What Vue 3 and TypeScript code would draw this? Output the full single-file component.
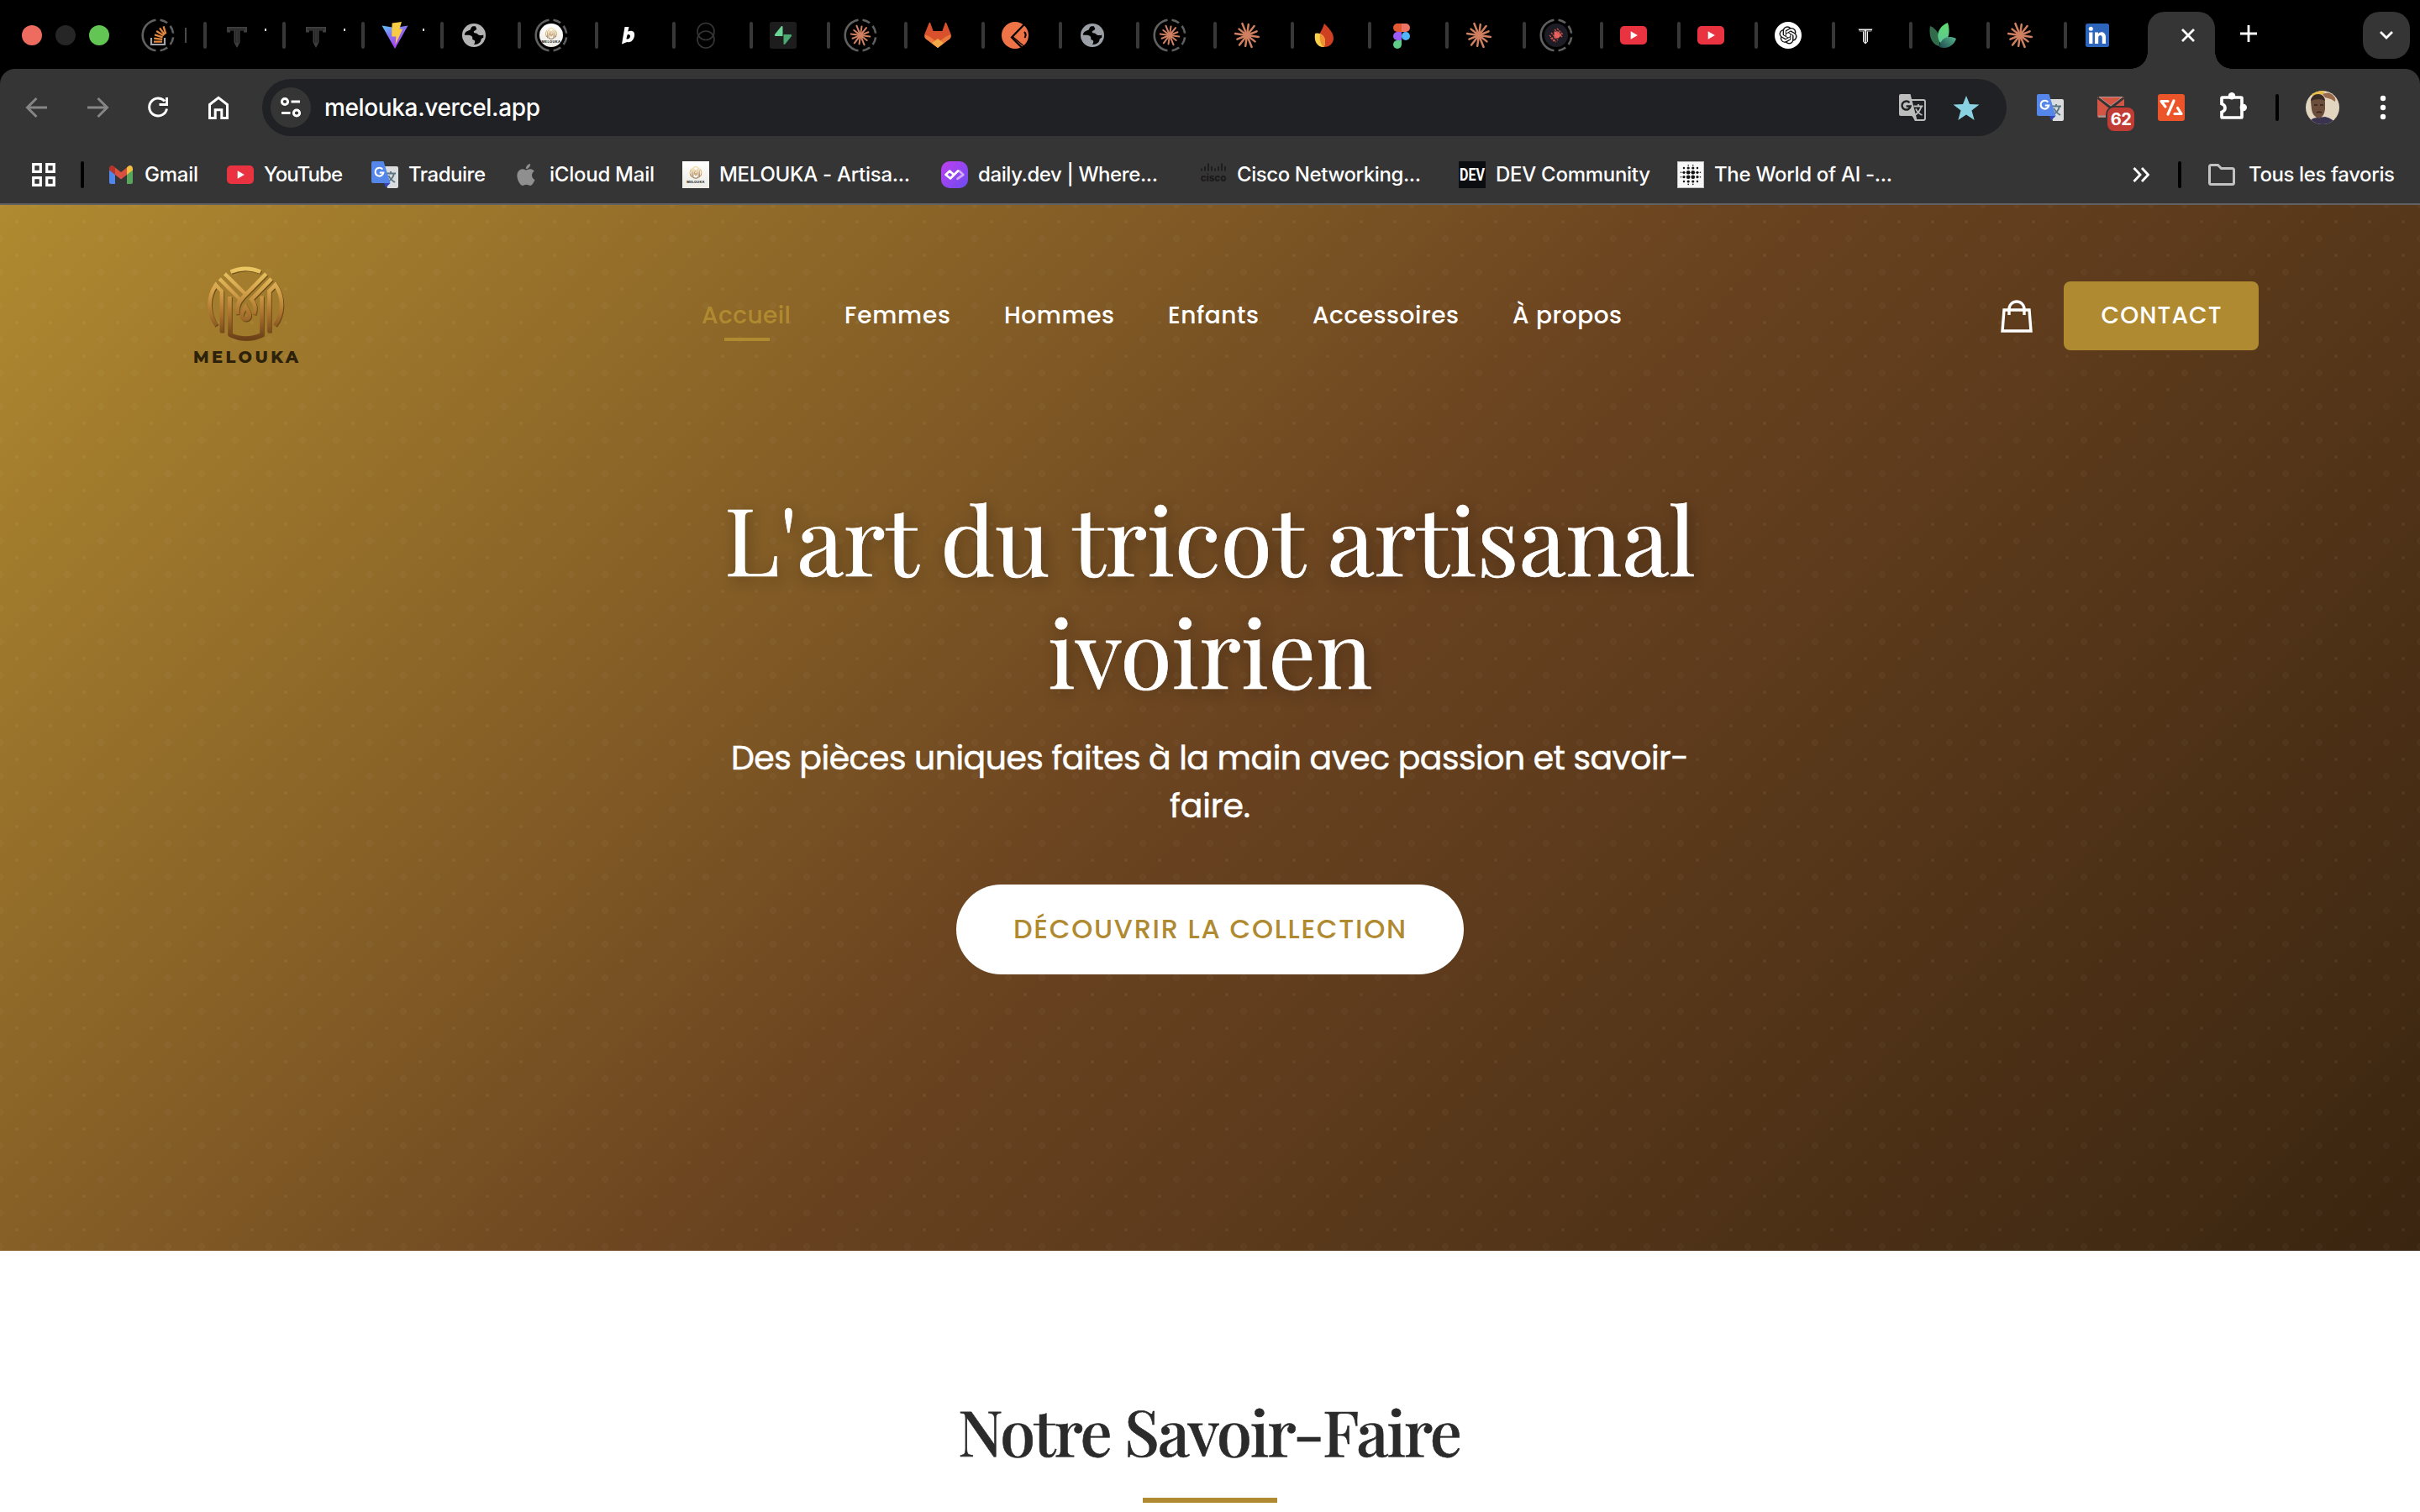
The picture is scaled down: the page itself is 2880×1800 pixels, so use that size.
<script setup lang="ts">
import type { Directive } from 'vue'

interface Tab {
  icon: string
  width: number
  ring?: boolean
  hint?: string
}

interface Bookmark {
  icon: string
  label: string
  text: number
  slot: number
}

interface NavLink {
  label: string
  text: number
  active?: boolean
}

/** Tracks a label out (or in) so that it fills the given width in pixels. */
const vFit: Directive<HTMLElement, number> = {
  mounted(el, { value }) {
    const count = Array.from(el.textContent ?? '').length
    const natural = el.getBoundingClientRect().width
    const spacing = (value - natural) / Math.max(1, count - 1)
    el.style.letterSpacing = `${spacing}px`
    el.style.marginRight = `${-spacing}px`
  },
}

const tabs: Tab[] = [
  { icon: 'stack', width: 94, ring: true, hint: 'line' },
  { icon: 'tdark', width: 94, hint: 'dot' },
  { icon: 'tdark', width: 94, hint: 'dot' },
  { icon: 'vite', width: 94, hint: 'dot' },
  { icon: 'globe', width: 92 },
  { icon: 'melouka-round', width: 92, ring: true },
  { icon: 'bolt-b', width: 92 },
  { icon: 'rings', width: 92 },
  { icon: 'supabase', width: 92 },
  { icon: 'claude-small', width: 92, ring: true },
  { icon: 'gitlab', width: 92 },
  { icon: 'postman', width: 92 },
  { icon: 'globe-cool', width: 92 },
  { icon: 'claude-small', width: 92, ring: true },
  { icon: 'claude', width: 92 },
  { icon: 'firebase', width: 92 },
  { icon: 'figma', width: 92 },
  { icon: 'claude', width: 92 },
  { icon: 'diamond', width: 92, ring: true },
  { icon: 'youtube', width: 92 },
  { icon: 'youtube', width: 92 },
  { icon: 'openai', width: 92 },
  { icon: 'tlight', width: 92 },
  { icon: 'leaf', width: 92 },
  { icon: 'claude', width: 92 },
  { icon: 'linkedin', width: 98 },
]

const bookmarks: Bookmark[] = [
  { icon: 'gmail', label: 'Gmail', text: 64, slot: 142 },
  { icon: 'youtube', label: 'YouTube', text: 94, slot: 172 },
  { icon: 'translate', label: 'Traduire', text: 92, slot: 168 },
  { icon: 'apple', label: 'iCloud Mail', text: 125, slot: 202 },
  { icon: 'melouka-square', label: 'MELOUKA - Artisa...', text: 227, slot: 308 },
  { icon: 'daily', label: 'daily.dev | Where...', text: 214, slot: 308 },
  { icon: 'cisco', label: 'Cisco Networking...', text: 219, slot: 308 },
  { icon: 'dev', label: 'DEV Community', text: 184, slot: 260 },
  { icon: 'world', label: 'The World of AI -...', text: 212, slot: 300 },
]

const links: NavLink[] = [
  { label: 'Accueil', text: 106, active: true },
  { label: 'Femmes', text: 126 },
  { label: 'Hommes', text: 131 },
  { label: 'Enfants', text: 108 },
  { label: 'Accessoires', text: 174 },
  { label: 'À propos', text: 130 },
]

const rays = [14, 12, 15, 13, 14.5, 12.5, 14, 12, 15, 13, 14, 12.5].map((length, i) => {
  const angle = ((i * 30 + 8) * Math.PI) / 180
  return { x: 16 + length * Math.cos(angle), y: 16 + length * Math.sin(angle) }
})

const dots = [
  [8, 8, 1.2], [13.2, 8, 1.6], [18.8, 8, 1.6], [24, 8, 1.2],
  [8, 13.3, 1.6], [13.2, 13.3, 2.3], [18.8, 13.3, 2.3], [24, 13.3, 1.6], [4.5, 13.3, 0.8], [27.5, 13.3, 0.8],
  [8, 18.7, 1.6], [13.2, 18.7, 2.3], [18.8, 18.7, 2.3], [24, 18.7, 1.6], [4.5, 18.7, 0.8], [27.5, 18.7, 0.8],
  [8, 24, 1.2], [13.2, 24, 1.6], [18.8, 24, 1.6], [24, 24, 1.2],
  [13.2, 4.8, 0.8], [18.8, 4.8, 0.8], [13.2, 27.4, 0.8], [18.8, 27.4, 0.8],
]
</script>

<template>
  <svg class="sprite" width="0" height="0" aria-hidden="true">
    <defs>
      <linearGradient id="g-vite" x1="0" y1="0" x2="0.6" y2="1">
        <stop offset="0" stop-color="#5cc8fb" />
        <stop offset="0.5" stop-color="#8a6cf5" />
        <stop offset="1" stop-color="#b13bf0" />
      </linearGradient>
      <linearGradient id="g-gold" gradientUnits="userSpaceOnUse" x1="337" y1="83" x2="337" y2="350">
        <stop offset="0" stop-color="#edca64" />
        <stop offset="0.35" stop-color="#d2a04a" />
        <stop offset="0.65" stop-color="#a9712e" />
        <stop offset="1" stop-color="#683c16" />
      </linearGradient>
      <linearGradient id="g-daily" x1="0" y1="0" x2="1" y2="1">
        <stop offset="0" stop-color="#c03ff0" />
        <stop offset="1" stop-color="#6a4cf0" />
      </linearGradient>
      <linearGradient id="g-leaf" x1="0.5" y1="0" x2="0.5" y2="1">
        <stop offset="0" stop-color="#62dc6c" />
        <stop offset="1" stop-color="#5cc49c" />
      </linearGradient>
      <linearGradient id="g-leaf-low" x1="1" y1="0.2" x2="0" y2="0.9">
        <stop offset="0" stop-color="#52b08a" />
        <stop offset="1" stop-color="#1f4c50" />
      </linearGradient>
      <linearGradient id="g-paper" x1="0" y1="0" x2="0" y2="1">
        <stop offset="0" stop-color="#ffffff" />
        <stop offset="1" stop-color="#ecebe4" />
      </linearGradient>
    </defs>

    <symbol id="i-stack" viewBox="0 0 32 32">
      <path d="M8 19v8h16v-8" fill="none" stroke="#a3a7ab" stroke-width="2.2" />
      <g stroke="#e5873c" stroke-width="2.3">
        <path d="M11 23.6h10M11.2 19.6l10 1.2M12 15.3l9.6 3M14.2 11l8.6 5.4M18 7.4l6 8M22.6 5.4l2.6 9" />
      </g>
    </symbol>
    <symbol id="i-tdark" viewBox="0 0 32 32">
      <path d="M4 6h24v6.500h-4v-2h-4.500v14L16 31l-3.500-6.500v-14H8v2H4z" fill="#3e3e3e" />
      <path d="M6 8.800h20M14.800 10v15M17.200 10v15" stroke="#111" stroke-width="0.8" />
    </symbol>
    <symbol id="i-tlight" viewBox="0 0 32 32">
      <path d="M7.5 8.5h17l-1.500 3h-4v12l-3 3-3-3v-12H9z" fill="#f2f2f2" />
      <path d="M8.500 10.800h6.200v13.400M23.500 10.800h-6.200v13.400" fill="none" stroke="#000" stroke-width="0.9" />
    </symbol>
    <symbol id="i-vite" viewBox="0 0 32 32">
      <path d="M0.5 4.5 16 32 31.5 4.5 16 7z" fill="url(#g-vite)" />
      <path d="M12.6 1.4 24 0l-2.6 8.6h3.8L16.6 27l.8-9.6h-5.2z" fill="#f8cb45" />
    </symbol>
    <symbol id="i-globe" viewBox="0 0 32 32">
      <circle cx="16" cy="16" r="14" fill="#b3b3b3" />
      <path d="M17.8 5.2h-2.6c-3 .4-2.8 4.4-4.4 4.9C8 10.8 5 12.5 4.8 15.6c2.4 1.2 7.4-.4 8.9 1.8 1.4 2-.5 3.5 2 4.2 2 .6 2 3 .3 5.4 5.600.4 8.200-3.400 8.300-5 .1-1.900 1.300-2.300 3-3.200v-3.400c-2.700 1-5.700.6-7-1-1.300-1.600-3.800-.4-4.500-2.200-.6-1.900 3.900-2.300 3.400-4.300z" fill="#000" />
    </symbol>
    <symbol id="i-globe-cool" viewBox="0 0 32 32">
      <circle cx="16" cy="16" r="14" fill="#9aa0a6" />
      <path d="M17.8 5.2h-2.6c-3 .4-2.8 4.4-4.4 4.9C8 10.8 5 12.5 4.8 15.6c2.4 1.2 7.4-.4 8.9 1.8 1.4 2-.5 3.5 2 4.2 2 .6 2 3 .3 5.4 5.600.4 8.200-3.400 8.300-5 .1-1.900 1.300-2.300 3-3.200v-3.400c-2.700 1-5.700.6-7-1-1.300-1.600-3.800-.4-4.500-2.200-.6-1.900 3.900-2.300 3.400-4.300z" fill="#000" />
    </symbol>
    <symbol id="i-mark" viewBox="200 80 275 275">
      <g fill="none" stroke="url(#g-gold)" stroke-width="14">
        <path d="M283 103Q337 80 391 103" />
        <path d="M232 296A127 127 0 0 1 230 150L251 173V320" />
        <path d="M442 296A127 127 0 0 0 444 150L422 173V320" />
        <path d="M280 192V328Q337 356 395 328V190" />
        <path d="M262 110 337 184M243 128 316 202Q307 218 307 256" />
        <path d="M411 110 330 192Q314 208 308 228M430 128 358 202Q378 226 367 256" />
        <path d="M337 229C326 246 323 252 323 260a14 14 0 0 0 28 0C351 252 348 246 337 229z" />
      </g>
    </symbol>
    <symbol id="i-bolt-b" viewBox="0 0 32 32">
      <path d="M11.5 6h5l-1.200 5.500c4.500-2 8.700-.2 7.700 5.300-.9 5.800-5.200 8.400-8.700 7.200L8 26.500zM14.600 15.500l-1.200 4.800c2.600.8 4.100-.6 4.500-2.600.4-2.200-1.300-3.200-3.300-2.200z" fill="#fff" fill-rule="evenodd" />
    </symbol>
    <symbol id="i-rings" viewBox="0 0 32 32">
      <g fill="none" stroke="#363636" stroke-width="1.6">
        <circle cx="16" cy="11.5" r="10" />
        <circle cx="16" cy="21" r="10" />
      </g>
    </symbol>
    <symbol id="i-supabase" viewBox="0 0 32 32">
      <rect width="32" height="32" rx="3" fill="#1d1d1d" />
      <path d="M15.5 6v11H7.200c-1.300 0-1.800-1.200-1-2.200L13.600 5.500c.7-.8 1.900-.4 1.900.5z" fill="#6bd396" />
      <path d="M16.5 26V15h8.300c1.300 0 1.800 1.200 1 2.200l-7.400 9.300c-.7.8-1.900.4-1.900-.5z" fill="#4ba873" />
    </symbol>
    <symbol id="i-claude" viewBox="0 0 32 32">
      <g stroke="#d08060" stroke-width="2.5" stroke-linecap="round">
        <line v-for="(ray, i) in rays" :key="i" x1="16" y1="16" :x2="ray.x" :y2="ray.y" />
      </g>
    </symbol>
    <symbol id="i-claude-small" viewBox="0 0 32 32">
      <use href="#i-claude" x="3" y="3" width="26" height="26" />
    </symbol>
    <symbol id="i-gitlab" viewBox="0 0 32 32">
      <path d="M16 31 1.500 20Q-.6 17.500.6 14L5.600 1.500Q6.500.2 7.300 1.500L10.600 11h10.800l3.300-9.500q.8-1.300 1.700 0L31.400 14q1.200 3.500-.9 6z" fill="#d9502c" />
      <path d="M.4 15.500Q4 15.800 9 19.500L16 25l7-5.500q5-3.700 8.600-4 .3 2.600-1.100 4.500L16 31 1.500 20Q.1 18.100.4 15.500z" fill="#ec7a3d" />
      <path d="M9 25.300 16 20l7 5.300L16 31z" fill="#f3a945" />
    </symbol>
    <symbol id="i-postman" viewBox="0 0 32 32">
      <circle cx="16" cy="16" r="16" fill="#ee7447" />
      <path d="M27 3 12 18.500l12 12" fill="none" stroke="#000" stroke-width="2.2" />
      <path d="M13 17.500l13 11" fill="none" stroke="#000" stroke-width="1.2" />
      <path d="M27 12q3 3 .5 7" fill="none" stroke="#000" stroke-width="2" />
    </symbol>
    <symbol id="i-firebase" viewBox="0 0 32 32">
      <path d="M16 2c8 8 11 12 11 18 0 5-4.500 10-11 10-5 0-8-3-8-9C8 16 13 12 16 2z" fill="#cf4022" />
      <path d="M5 14c6-2 12 3 12 9 0 4-1 7-2 7C8 30 3.500 24 5 14z" fill="#f8cf48" />
      <path d="M11 14.500c4 2 6 5 6 8.500 0 4-1 7-2 7 -4-4-5-10-4-15.500z" fill="#ef9331" />
    </symbol>
    <symbol id="i-figma" viewBox="0 0 32 32">
      <path d="M11 2h5v10h-5a5 5 0 0 1 0-10z" fill="#e35a32" />
      <path d="M16 2h5a5 5 0 0 1 0 10h-5z" fill="#ee7468" />
      <path d="M11 12h5v10h-5a5 5 0 0 1 0-10z" fill="#9b5cf6" />
      <circle cx="21" cy="17" r="5" fill="#54b4f8" />
      <path d="M11 22h5v5a5 5 0 1 1-5-5z" fill="#5fcb86" />
    </symbol>
    <symbol id="i-diamond" viewBox="0 0 32 32">
      <circle cx="16" cy="16" r="14" fill="#1e1c24" />
      <path d="M13.5 11.500h5l4 4-4 4h-5z" fill="#e8625e" />
      <path d="M8 16l8 8M10 13l8 9M17 8l7 7M14 9l9 9M9.500 19l5 5" stroke="#c9524f" stroke-width="1.4" stroke-dasharray="2.5 1" />
    </symbol>
    <symbol id="i-youtube" viewBox="0 0 32 32">
      <rect y="5" width="32" height="22" rx="5" fill="#ea3340" />
      <path d="M12.700 11.300v9.400l8.200-4.700z" fill="#fff" />
    </symbol>
    <symbol id="i-openai" viewBox="0 0 32 32">
      <circle cx="16" cy="16" r="16" fill="#fff" />
      <path transform="translate(5.5 5.3) scale(0.88)" d="M22.2819 9.8211a5.9847 5.9847 0 0 0-.5157-4.9108 6.0462 6.0462 0 0 0-6.5098-2.9A6.0651 6.0651 0 0 0 4.9807 4.1818a5.9847 5.9847 0 0 0-3.9977 2.9 6.0462 6.0462 0 0 0 .7427 7.0966 5.98 5.98 0 0 0 .511 4.9107 6.051 6.051 0 0 0 6.5146 2.9001A5.9847 5.9847 0 0 0 13.2599 24a6.0557 6.0557 0 0 0 5.7718-4.2058 5.9894 5.9894 0 0 0 3.9977-2.9001 6.0557 6.0557 0 0 0-.7475-7.0729zm-9.022 12.6081a4.4755 4.4755 0 0 1-2.8764-1.0408l.1419-.0804 4.7783-2.7582a.7948.7948 0 0 0 .3927-.6813v-6.7369l2.02 1.1686a.071.071 0 0 1 .038.052v5.5826a4.504 4.504 0 0 1-4.4945 4.4944zm-9.6607-4.1254a4.4708 4.4708 0 0 1-.5346-3.0137l.142.0852 4.783 2.7582a.7712.7712 0 0 0 .7806 0l5.8428-3.3685v2.3324a.0804.0804 0 0 1-.0332.0615L9.74 19.9502a4.4992 4.4992 0 0 1-6.1408-1.6464zM2.3408 7.8956a4.485 4.485 0 0 1 2.3655-1.9728V11.6a.7664.7664 0 0 0 .3879.6765l5.8144 3.3543-2.0201 1.1685a.0757.0757 0 0 1-.071 0l-4.8303-2.7865A4.504 4.504 0 0 1 2.3408 7.872zm16.5963 3.8558L13.1038 8.364 15.1192 7.2a.0757.0757 0 0 1 .071 0l4.8303 2.7913a4.4944 4.4944 0 0 1-.6765 8.1042v-5.6772a.79.79 0 0 0-.407-.667zm2.0107-3.0231l-.142-.0852-4.7735-2.7818a.7759.7759 0 0 0-.7854 0L9.409 9.2297V6.8974a.0662.0662 0 0 1 .0284-.0615l4.8303-2.7866a4.4992 4.4992 0 0 1 6.6802 4.66zM8.3065 12.863l-2.02-1.1638a.0804.0804 0 0 1-.038-.0567V6.0742a4.4992 4.4992 0 0 1 7.3757-3.4537l-.142.0805L8.704 5.459a.7948.7948 0 0 0-.3927.6813zm1.0976-2.3654l2.602-1.4998 2.6069 1.4998v2.9994l-2.5974 1.4997-2.6067-1.4997Z" fill="#111" />
    </symbol>
    <symbol id="i-leaf" viewBox="0 0 32 32">
      <path d="M1 5c9 4 13 12 11 24C3 27-1 17 1 5z" fill="#316b4c" />
      <path d="M22 1c3 10 2 20-6 26-8-4-9-20 6-26z" fill="url(#g-leaf)" />
      <path d="M32 20c-3 9-11 13-20 10 1-10 10-15 20-10z" fill="url(#g-leaf-low)" />
    </symbol>
    <symbol id="i-linkedin" viewBox="0 0 32 32">
      <rect x="2" y="2" width="28" height="28" rx="2.5" fill="#2d65bc" />
      <circle cx="8.3" cy="8.3" r="2.5" fill="#fff" />
      <path d="M6.200 12.500h4.200V26H6.200zM13 12.500h4v1.900c2.200-3.600 9-2.800 9 3.600v8h-4.200v-7c0-4-4.600-3.700-4.600 0v7H13z" fill="#fff" />
    </symbol>
    <symbol id="i-gmail" viewBox="0 0 32 32">
      <path d="M2 9v16q0 2 2 2h5V14z" fill="#4f86ec" />
      <path d="M30 9v16q0 2-2 2h-5V14z" fill="#58a55c" />
      <path d="M9 7.500 16 13l7-5.500V16l-7 5.500L9 16z" fill="#d95040" />
      <path d="M2 9c0-4 3.500-5 5.500-3L9 7.300V16l-7-5.500z" fill="#b5352a" />
      <path d="M30 9c0-4-3.500-5-5.500-3L23 7.300V16l7-5.500z" fill="#f2bf42" />
    </symbol>
    <symbol id="i-translate" viewBox="0 0 32 32">
      <path d="M13 6h17q2 0 2 2v22q0 2-2 2H19z" fill="#dadcdd" />
      <path d="M17.500 14.500h11.500M23 12v2.500M19.500 24.500q6-3.500 7.500-10M20.500 17q2 5 7.500 8" fill="none" stroke="#5d7684" stroke-width="1.9" />
      <path d="M15 26h7.500L17 31.500z" fill="#3343b8" />
      <path d="M2 0h12.500L22.500 26H2q-2 0-2-2V2q0-2 2-2z" fill="#5586ea" />
      <path d="M13.300 9.600A4.900 4.900 0 1 0 14.300 13.500H9.800" fill="none" stroke="#fff" stroke-width="2.1" />
    </symbol>
    <symbol id="i-translate-line" viewBox="0 0 32 32">
      <path d="M15 7h14q2 0 2 2v20q0 2-2 2H19.500l-3-6" fill="none" stroke="#bdbdbd" stroke-width="1.9" />
      <path d="M17.500 14.500h11M23 12v2.500M19 25q6-4 7.500-10.500M20 17.500q2 5 7.500 7.500" fill="none" stroke="#bdbdbd" stroke-width="1.8" />
      <path d="M2 0h11.500L21.500 31 15 26H2q-2 0-2-2V2q0-2 2-2z" fill="#bdbdbd" />
      <path d="M12.500 10.200A5.100 5.100 0 1 0 13.600 14.500H8.600" fill="none" stroke="#202124" stroke-width="2.5" />
    </symbol>
    <symbol id="i-apple" viewBox="0 0 32 32">
      <path transform="translate(3 3) scale(1.08)" d="M12.152 6.896c-.948 0-2.415-1.078-3.96-1.04-2.04.027-3.91 1.183-4.961 3.014-2.117 3.675-.546 9.103 1.519 12.09 1.013 1.454 2.208 3.09 3.792 3.039 1.52-.065 2.09-.987 3.935-.987 1.831 0 2.35.987 3.96.948 1.637-.026 2.676-1.48 3.676-2.948 1.156-1.688 1.636-3.325 1.662-3.415-.039-.013-3.182-1.221-3.22-4.857-.026-3.04 2.48-4.494 2.597-4.559-1.429-2.09-3.623-2.324-4.39-2.376-2-.156-3.675 1.09-4.61 1.09zM15.53 3.83c.843-1.012 1.4-2.427 1.245-3.83-1.207.052-2.662.805-3.532 1.818-.78.896-1.454 2.338-1.273 3.714 1.338.104 2.715-.688 3.559-1.701" fill="#8f8f8f" />
    </symbol>
    <symbol id="i-daily" viewBox="0 0 32 32">
      <rect width="32" height="32" rx="10" fill="url(#g-daily)" />
      <path d="M21.500 11.500 26.300 16 19.500 20.800" fill="none" stroke="#cfa9f8" stroke-width="2.8" stroke-linejoin="round" stroke-linecap="round" />
      <path d="M14 15 10.200 11.500 5.500 16 11 20.500 20 11.500" fill="none" stroke="#fff" stroke-width="2.6" stroke-linejoin="round" stroke-linecap="round" />
    </symbol>
    <symbol id="i-world" viewBox="0 0 32 32">
      <rect x="0.5" y="0.5" width="31" height="31" fill="#f7f7f7" stroke="#bdbdbd" />
      <circle v-for="(dot, i) in dots" :key="i" :cx="dot[0]" :cy="dot[1]" :r="dot[2]" fill="#111" />
    </symbol>
  </svg>

  <!-- Icons that carry lettering -->
  <svg class="lettered" aria-hidden="true">
    <symbol id="i-melouka-round" viewBox="0 0 32 32">
      <circle cx="16" cy="16" r="14" fill="url(#g-paper)" />
      <use href="#i-mark" x="9" y="7" width="14" height="14" />
      <text x="16" y="25" text-anchor="middle" font-family="Inter, sans-serif" font-weight="800" font-size="4" letter-spacing="0.4" fill="#333">MELOUKA</text>
    </symbol>
    <symbol id="i-melouka-square" viewBox="0 0 32 32">
      <rect width="32" height="32" fill="url(#g-paper)" />
      <use href="#i-mark" x="8.500" y="6" width="15" height="15" />
      <text x="16" y="25.500" text-anchor="middle" font-family="Inter, sans-serif" font-weight="800" font-size="3.8" letter-spacing="0.3" fill="#333">MELOUKA</text>
    </symbol>
    <symbol id="i-cisco" viewBox="0 0 32 32">
      <path d="M2 8.500v3M6 6v5.500M10 2.500v9M14 6v5.500M18 8.500v3M22 6v5.500M26 2.500v9M30 6v5.500" stroke="#1a1a1a" stroke-width="1.7" />
      <text x="16" y="24" text-anchor="middle" font-family="Inter, sans-serif" font-weight="800" font-size="11.5" fill="#1a1a1a">cisco</text>
    </symbol>
    <symbol id="i-dev" viewBox="0 0 32 32">
      <rect width="32" height="32" fill="#0b0d10" />
      <text x="16" y="23" text-anchor="middle" textLength="30" lengthAdjust="spacingAndGlyphs" font-family="Roboto, sans-serif" font-weight="700" font-size="20" fill="#fff">DEV</text>
    </symbol>
  </svg>

  <div class="window">
    <header class="tabstrip">
      <div class="lights">
        <i class="light red"></i>
        <i class="light dim"></i>
        <i class="light green"></i>
      </div>
      <div v-for="(tab, i) in tabs" :key="i" class="tab" :style="{ width: `${tab.width}px` }">
        <span class="favicon">
          <svg v-if="tab.ring" class="ring" viewBox="0 0 40 40">
            <path d="M17.5 1.700A18.500 18.500 0 0 0 17.500 38.300" />
            <path d="M22.5 1.700A18.500 18.500 0 0 1 22.500 38.300" stroke-dasharray="9.4 4.9" />
          </svg>
          <svg class="glyph"><use :href="`#i-${tab.icon}`" /></svg>
        </span>
        <i v-if="tab.hint" class="hint" :class="tab.hint"></i>
        <i v-if="i < tabs.length - 1" class="divider"></i>
      </div>
      <div class="tab-active">
        <svg width="20" height="20" viewBox="0 0 20 20"><path d="M3 3l14 14M17 3 3 17" /></svg>
      </div>
      <svg class="plus" width="20" height="20" viewBox="0 0 20 20"><path d="M10 0v20M0 10h20" /></svg>
      <div class="tab-search">
        <svg width="18" height="12" viewBox="0 0 18 12"><path d="M2 2l7 7 7-7" /></svg>
      </div>
    </header>

    <section class="chrome">
      <div class="toolbar">
        <svg class="tool muted" viewBox="0 0 32 32"><path d="M28 16H5M15.500 5 4.500 16l11 11" /></svg>
        <svg class="tool muted" viewBox="0 0 32 32"><path d="M4 16h23M16.500 5l11 11-11 11" /></svg>
        <svg class="tool" viewBox="0 0 32 32"><path d="M26.500 17.500A10.500 10.500 0 1 1 24 8.500M26.500 4v8.500h-9" /></svg>
        <svg class="tool" viewBox="0 0 32 32"><path d="M5.500 12.500 16 4.300l10.500 8.200v16h-6.700v-9.800h-7.600v9.800H5.500z" /></svg>
        <div class="address">
          <span class="site-chip">
            <svg width="28" height="28" viewBox="0 0 28 28">
              <circle cx="7" cy="7" r="3.6" /><path d="M14.500 7H25" />
              <circle cx="21" cy="20.5" r="3.6" /><path d="M3 20.500h10.500" />
            </svg>
          </span>
          <span class="url"><span v-fit="257">melouka.vercel.app</span></span>
          <svg class="address-icon" viewBox="0 0 32 32"><use href="#i-translate-line" /></svg>
          <svg class="address-icon star" viewBox="0 0 32 32"><path d="M16 2l4 10 11.500.5-9 7 3.200 11.500L16 24.500l-9.700 6.500L9.500 19.500l-9-7L12 12z" /></svg>
        </div>
        <div class="extensions">
          <svg class="ext"><use href="#i-translate" /></svg>
          <div class="mail">
            <svg class="ext" viewBox="0 0 32 32">
              <rect y="3" width="32" height="25" rx="2" fill="#d55545" />
              <path d="M1 26.500h20" stroke="#9b9b9b" stroke-width="2" />
              <path d="M1 4l15 12L31 4" fill="none" stroke="#353535" stroke-width="4" />
              <path d="M2 3.500h28L16 14z" fill="#d55545" stroke="#b9a9a6" stroke-width="0.8" />
            </svg>
            <span class="badge">62</span>
          </div>
          <svg class="ext" viewBox="0 0 32 32">
            <rect width="32" height="32" rx="3" fill="#eb5529" />
            <path d="M12 8.500H4l5 6.500M19 8l-7 16M23.500 16.500l4.500 7h-8" fill="none" stroke="#fff" stroke-width="3.2" stroke-linecap="round" stroke-linejoin="round" />
          </svg>
          <svg class="ext puzzle" viewBox="0 0 32 32">
            <path d="M2 7q0-1 1-1h22q1 0 1 1v22q0 1-1 1H3q-1 0-1-1v-5.500q4-1.500 4-5t-4-5z" fill="none" stroke="#fff" stroke-width="3.7" />
            <circle cx="14" cy="4.2" r="4.2" fill="#fff" />
            <circle cx="27.8" cy="18" r="4.2" fill="#fff" />
          </svg>
        </div>
        <i class="bar"></i>
        <svg class="avatar" viewBox="0 0 40 40">
          <defs><clipPath id="avatar-clip"><circle cx="20" cy="20" r="20" /></clipPath></defs>
          <g clip-path="url(#avatar-clip)">
            <rect width="40" height="40" fill="#e2d6c0" />
            <path d="M0 0h22v4L6 6H0z" fill="#e6bd4c" />
            <path d="M20 4q8-4 13 2 3 3 2 7l-5-3-7-2z" fill="#9a6a4c" />
            <path d="M4 40q1-8 10-8l9-1q10 2 14 10z" fill="#3a3350" />
            <path d="M6 13Q7 5 15 5q8 0 8 9v8q-1 9-7 11Q8 31 7 22z" fill="#6b4d3b" />
            <path d="M6 12Q7 4 15 4q7 0 8 8-7-4-17 0z" fill="#3a2b24" />
            <path d="M10 17h4M17 17h4M13 26q3-1.500 6 0" stroke="#33221a" stroke-width="1.4" />
          </g>
        </svg>
        <svg class="kebab" width="8" height="32" viewBox="0 0 8 32"><circle cx="4" cy="5" r="3.2" /><circle cx="4" cy="16" r="3.2" /><circle cx="4" cy="27" r="3.2" /></svg>
      </div>

      <div class="bookmarks">
        <svg class="apps" width="28" height="28" viewBox="0 0 28 28">
          <path d="M1.700 1.700h8.600v8.600H1.700zM17.700 1.700h8.600v8.600h-8.600zM1.700 17.700h8.600v8.600H1.700zM17.700 17.700h8.600v8.600h-8.600z" />
        </svg>
        <i class="bar"></i>
        <div class="bookmark-list">
          <div v-for="item in bookmarks" :key="item.label" class="bookmark" :style="{ width: `${item.slot}px` }">
            <svg class="mark"><use :href="`#i-${item.icon}`" /></svg>
            <span v-fit="item.text" class="label">{{ item.label }}</span>
          </div>
        </div>
        <svg class="more" width="20" height="20" viewBox="0 0 20 20"><path d="M1.500 2 9 10l-7.500 8M11 2l7.500 8-7.500 8" /></svg>
        <i class="bar"></i>
        <svg class="folder" width="32" height="26" viewBox="0 0 32 26"><path d="M1.500 3.500q0-2 2-2h8l4 4h13q2 0 2 2v15q0 2-2 2h-25q-2 0-2-2z" /></svg>
        <span v-fit="174" class="label">Tous les favoris</span>
      </div>
    </section>

    <main>
      <section class="hero">
        <nav class="site-nav">
          <div class="brand">
            <svg width="91" height="91"><use href="#i-mark" /></svg>
            <span v-fit="125" class="brand-name">MELOUKA</span>
          </div>
          <ul class="links">
            <li v-for="link in links" :key="link.label" :class="{ active: link.active }">
              <span v-fit="link.text">{{ link.label }}</span>
            </li>
          </ul>
          <div class="actions">
            <svg class="bag" width="40" height="44" viewBox="0 0 40 44">
              <path d="M5 15h30l2 25H3z" />
              <path d="M11 21v-7a9 9 0 0 1 18 0v7" />
            </svg>
            <a class="contact"><span v-fit="143">CONTACT</span></a>
          </div>
        </nav>
        <div class="hero-body">
          <h1>
            <span v-fit="1156">L'art du tricot artisanal</span><br />
            <span v-fit="386">ivoirien</span>
          </h1>
          <p>
            <span v-fit="1140">Des pièces uniques faites à la main avec passion et savoir-</span><br />
            <span v-fit="96">faire.</span>
          </p>
          <a class="cta"><span v-fit="467">DÉCOUVRIR LA COLLECTION</span></a>
        </div>
      </section>

      <section class="craft">
        <h2><span v-fit="600">Notre Savoir-Faire</span></h2>
        <i class="rule"></i>
      </section>
    </main>
  </div>
</template>

<style>
html,
body {
  margin: 0;
  background: #fff;
}
</style>

<style scoped>
* {
  box-sizing: border-box;
}

.sprite {
  position: absolute;
}

.window {
  width: 2880px;
  height: 1800px;
  overflow: hidden;
  background: #fff;
  font-family: 'Inter', 'Liberation Sans', sans-serif;
}

svg {
  display: block;
  flex: none;
}

.lettered {
  display: none;
}

span {
  white-space: nowrap;
}

/* Tab strip */
.tabstrip {
  display: flex;
  align-items: center;
  height: 82px;
  padding-top: 2px;
  background: #000;
}

.lights {
  display: flex;
  flex: none;
  gap: 16px;
  width: 150px;
  padding-left: 26px;
}

.light {
  width: 24px;
  height: 24px;
  border-radius: 50%;
}

.red {
  background: #ed6b5f;
}

.dim {
  background: #262626;
}

.green {
  background: #62c554;
}

.tab {
  display: flex;
  flex: none;
  align-items: center;
  padding-left: 18px;
}

.favicon {
  display: grid;
  place-items: center;
  width: 40px;
  height: 40px;
}

.favicon > svg {
  grid-area: 1 / 1;
}

.ring {
  width: 40px;
  height: 40px;
  fill: none;
  stroke: #606060;
  stroke-width: 2.6;
}

.glyph {
  width: 32px;
  height: 32px;
}

.hint {
  width: 2px;
  margin-left: 12px;
  background: #4a4a4a;
}

.hint.line {
  height: 18px;
}

.hint.dot {
  height: 3px;
  margin: -14px 0 0 13px;
  background: #d8d8d8;
}

.divider {
  width: 4px;
  height: 32px;
  margin-right: -2px;
  margin-left: auto;
  border-radius: 2px;
  background: #383838;
}

.tab-active {
  position: relative;
  display: flex;
  flex: none;
  align-items: center;
  align-self: flex-end;
  justify-content: flex-end;
  width: 80px;
  height: 68px;
  padding: 0 22px 12px 0;
  border-radius: 20px 20px 0 0;
  background: #353535;
}

.tab-active::before,
.tab-active::after {
  position: absolute;
  bottom: 0;
  width: 20px;
  height: 20px;
  content: '';
}

.tab-active::before {
  right: 100%;
  background: radial-gradient(circle at 0 0, transparent 19.5px, #353535 20px);
}

.tab-active::after {
  left: 100%;
  background: radial-gradient(circle at 100% 0, transparent 19.5px, #353535 20px);
}

.tab-active path,
.plus path,
.tab-search path {
  fill: none;
  stroke: #fff;
  stroke-width: 2.8;
}

.plus {
  margin: -4px 0 0 30px;
}

.tab-search {
  display: grid;
  place-items: center;
  width: 56px;
  height: 56px;
  margin: 0 12px 0 auto;
  border-radius: 20px;
  background: #353535;
}

/* Toolbar */
.chrome {
  height: 162px;
  border-bottom: 2px solid #616163;
  background: linear-gradient(#000, #000) top / 100% 20px no-repeat, #353535;
}

.toolbar {
  display: flex;
  align-items: center;
  height: 92px;
  padding-left: 28px;
  border-radius: 18px 18px 0 0;
  background: #353535;
}

.tool {
  width: 32px;
  height: 32px;
  margin-right: 40px;
  fill: none;
  stroke: #fff;
  stroke-width: 3;
}

.tool.muted {
  stroke: #868686;
}

.address {
  display: flex;
  flex: none;
  align-items: center;
  width: 2076px;
  height: 68px;
  margin-left: -4px;
  padding: 0 32px 0 10px;
  border-radius: 34px;
  background: #202124;
}

.site-chip {
  display: grid;
  place-items: center;
  width: 48px;
  height: 48px;
  border-radius: 50%;
  background: #353535;
}

.site-chip svg {
  fill: none;
  stroke: #fff;
  stroke-width: 3;
}

.url {
  flex: 1;
  padding-left: 16px;
  color: #fff;
  font-size: 28px;
  font-weight: 450;
  line-height: 40px;
}

.url span {
  display: inline-block;
}

.address-icon {
  width: 32px;
  height: 32px;
  margin-left: 32px;
}

.star {
  fill: #88d2e1;
}

.extensions {
  display: flex;
  gap: 40px;
  margin-left: 36px;
}

.ext {
  width: 32px;
  height: 32px;
}

.puzzle {
  margin: -2px 0 2px 2px;
}

.mail {
  position: relative;
}

.badge {
  position: absolute;
  top: 16px;
  left: 12px;
  width: 32px;
  height: 28px;
  border-radius: 8px;
  background: #c23c36;
  box-shadow: 0 0 0 2px #353535;
  color: #fff;
  font-size: 20px;
  font-weight: 700;
  line-height: 28px;
  text-align: center;
  letter-spacing: -0.5px;
}

.bar {
  flex: none;
  width: 4px;
  height: 32px;
  border-radius: 2px;
  background: #000;
}

.toolbar .bar {
  margin-left: 34px;
}

.avatar {
  width: 40px;
  height: 40px;
  margin-left: 32px;
}

.kebab {
  margin-left: 48px;
  fill: #fff;
}

/* Bookmarks bar */
.bookmarks {
  display: flex;
  align-items: center;
  height: 68px;
  padding: 0 30px 0 38px;
}

.apps,
.more {
  fill: none;
  stroke: #fff;
  stroke-width: 3.2;
}

.apps {
  margin-right: 30px;
}

.bookmark-list {
  display: flex;
  flex: 1;
  padding-left: 28px;
}

.bookmark {
  display: flex;
  flex: none;
  align-items: center;
}

.mark {
  width: 32px;
  height: 32px;
  margin-right: 12px;
}

.label {
  color: #fff;
  font-size: 24px;
  font-weight: 500;
  line-height: 32px;
}

.more {
  margin-right: 34px;
  stroke-width: 2.8;
}

.folder {
  margin: 0 16px 0 32px;
  fill: none;
  stroke: #c2c2c2;
  stroke-width: 3;
}

/* Hero */
.hero {
  height: 1245px;
  background:
    radial-gradient(circle at 0 0, rgba(255, 255, 255, 0.028) 3.8px, transparent 4.2px) 0 0 / 40px 40px,
    radial-gradient(circle at 40px 0, rgba(255, 255, 255, 0.028) 3.8px, transparent 4.2px) 0 0 / 40px 40px,
    radial-gradient(circle at 0 40px, rgba(255, 255, 255, 0.028) 3.8px, transparent 4.2px) 0 0 / 40px 40px,
    radial-gradient(circle at 40px 40px, rgba(255, 255, 255, 0.028) 3.8px, transparent 4.2px) 0 0 / 40px 40px,
    radial-gradient(circle at 20px 20px, rgba(255, 255, 255, 0.05) 1.8px, transparent 2.2px) 0 0 / 40px 40px,
    linear-gradient(135deg, #b08a30 0%, #6a4320 50%, #3a2510 100%);
  font-family: 'Poppins', 'Inter', sans-serif;
}

.site-nav {
  display: flex;
  align-items: center;
  height: 264px;
  padding: 0 192px 0 230px;
}

.brand {
  display: flex;
  flex: none;
  flex-direction: column;
  align-items: flex-start;
  width: 126px;
}

.brand svg {
  margin-left: 16.5px;
  filter: drop-shadow(1px 1px 0.5px rgba(60, 35, 5, 0.55));
}

.brand-name {
  color: #2d220c;
  font-family: 'Montserrat', 'Lato', sans-serif;
  font-size: 19.5px;
  font-weight: 800;
  line-height: 24px;
  margin-top: 6px;
}

.links {
  display: flex;
  gap: 64px;
  margin: 0 0 0 479px;
  padding: 0;
  color: #fff;
  font-size: 28px;
  font-weight: 500;
  line-height: 40px;
  list-style: none;
}

.links li {
  position: relative;
}

.links span {
  display: inline-block;
}

.links .active {
  color: #b08a30;
}

.links .active::after {
  position: absolute;
  bottom: -10px;
  left: 27px;
  width: 54px;
  height: 4px;
  background: #b08a30;
  content: '';
}

.actions {
  display: flex;
  align-items: center;
  margin-left: auto;
}

.bag {
  margin-right: 36px;
  fill: none;
  stroke: #fff;
  stroke-width: 3.4;
}

.contact {
  display: grid;
  place-items: center;
  width: 232px;
  height: 82px;
  border-radius: 8px;
  background: #b08a30;
  color: #fff;
  font-size: 28px;
  font-weight: 500;
  line-height: 80px;
}

.hero-body {
  display: flex;
  flex-direction: column;
  align-items: center;
  padding-top: 65px;
  text-align: center;
}

h1,
h2,
p {
  margin: 0;
}

h1 span,
h2 span,
p span {
  display: inline-block;
}

h1 {
  color: #fff;
  font-family: 'Playfair Display', 'Liberation Serif', serif;
  font-size: 112px;
  font-weight: 400;
  line-height: 134px;
  text-shadow: 3px 4px 18px rgba(0, 0, 0, 0.3);
  -webkit-text-stroke: 0.7px #fff;
}

p {
  margin-top: 33px;
  color: #fff;
  font-size: 39.4px;
  font-weight: 400;
  line-height: 57px;
  -webkit-text-stroke: 0.5px #fff;
}

.cta {
  display: grid;
  place-items: center;
  width: 604px;
  height: 107px;
  margin-top: 65px;
  padding-right: 1px;
  border-radius: 54px;
  background: #fff;
  color: #b08a30;
  font-size: 32px;
  font-weight: 500;
  line-height: 105px;
}

.cta span {
  height: 107px;
}

/* Craft section */
.craft {
  display: flex;
  flex-direction: column;
  align-items: center;
  padding-top: 166px;
}

h2 {
  color: #2b2b2b;
  font-family: 'Playfair Display', 'Liberation Serif', serif;
  font-size: 75.5px;
  font-weight: 500;
  line-height: 96px;
  -webkit-text-stroke: 0.6px #2b2b2b;
}

.rule {
  width: 160px;
  height: 6px;
  margin-top: 32px;
  background: #b08a30;
}
</style>
